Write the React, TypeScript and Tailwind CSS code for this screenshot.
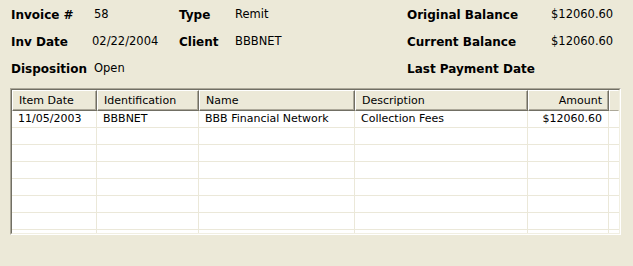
import React from "react";

const cols = [
  { key: "date", title: "Item Date", w: "w-[85px]", align: "text-left" },
  { key: "id", title: "Identification", w: "w-[102px]", align: "text-left" },
  { key: "name", title: "Name", w: "w-[156px]", align: "text-left" },
  { key: "desc", title: "Description", w: "w-[173px]", align: "text-left" },
  { key: "amt", title: "Amount", w: "w-[81px]", align: "text-right" },
];

const rows: Record<string, string>[] = [
  {
    date: "11/05/2003",
    id: "BBBNET",
    name: "BBB Financial Network",
    desc: "Collection Fees",
    amt: "$12060.60",
  },
  {},
  {},
  {},
  {},
  {},
  {},
  {},
];

function Label({ text, w }: { text: string; w: string }) {
  return <div className={`${w} shrink-0 font-bold text-[12px]`}>{text}</div>;
}

function Value({ text, w }: { text: string; w: string }) {
  return <div className={`${w} shrink-0 text-[11.5px]`}>{text}</div>;
}

export default function App() {
  return (
    <div className="w-[633px] h-[266px] overflow-hidden bg-[#ECE9D8] text-black font-['DejaVu_Sans',sans-serif] pt-[2px]">
      <div className="flex items-center h-[26px] pl-[11px]">
        <Label text="Invoice #" w="w-[83px]" />
        <Value text="58" w="w-[85px]" />
        <Label text="Type" w="w-[56px]" />
        <Value text="Remit" w="w-[172px]" />
        <Label text="Original Balance" w="w-[144px]" />
        <Value text="$12060.60" w="w-[70px]" />
      </div>
      <div className="flex items-center h-[27px] pl-[11px]">
        <Label text="Inv Date" w="w-[81px]" />
        <Value text="02/22/2004" w="w-[87px]" />
        <Label text="Client" w="w-[56px]" />
        <Value text="BBBNET" w="w-[172px]" />
        <Label text="Current Balance" w="w-[144px]" />
        <Value text="$12060.60" w="w-[70px]" />
      </div>
      <div className="flex items-center h-[27px] pl-[11px]">
        <Label text="Disposition" w="w-[83px]" />
        <Value text="Open" w="w-[85px]" />
        <div className="w-[228px] shrink-0" />
        <Label text="Last Payment Date" w="w-[144px]" />
      </div>

      <div className="mt-[6px] ml-[10px] w-[611px] h-[147px] border border-t-[#ACA899] border-l-[#ACA899] border-b-white border-r-white">
        <div className="h-full border border-t-[#716F64] border-l-[#716F64] border-b-[#F1EFE2] border-r-[#F1EFE2] bg-white overflow-hidden">
          <div className="flex h-[21px] bg-[#ECE9D8] text-[11px]">
            {cols.map((c) => (
              <div
                key={c.key}
                className={`${c.w} ${c.align} shrink-0 px-[6px] leading-[20px] border border-t-white border-l-white border-r-[#716F64] border-b-[#716F64] shadow-[inset_-1px_-1px_0_#ACA899] whitespace-nowrap`}
              >
                {c.title}
              </div>
            ))}
            <div className="flex-1 border border-t-white border-l-white border-r-[#ECE9D8] border-b-[#ACA899]" />
          </div>
          {rows.map((r, i) => (
            <div key={i} className="flex h-[17px] text-[11px] border-b border-[#EBE8D9]">
              {cols.map((c) => (
                <div
                  key={c.key}
                  className={`${c.w} ${c.align} shrink-0 px-[6px] leading-[16px] border-r border-[#EBE8D9] whitespace-nowrap overflow-hidden`}
                >
                  {r[c.key] ?? ""}
                </div>
              ))}
              <div className="flex-1" />
            </div>
          ))}
        </div>
      </div>
    </div>
  );
}
